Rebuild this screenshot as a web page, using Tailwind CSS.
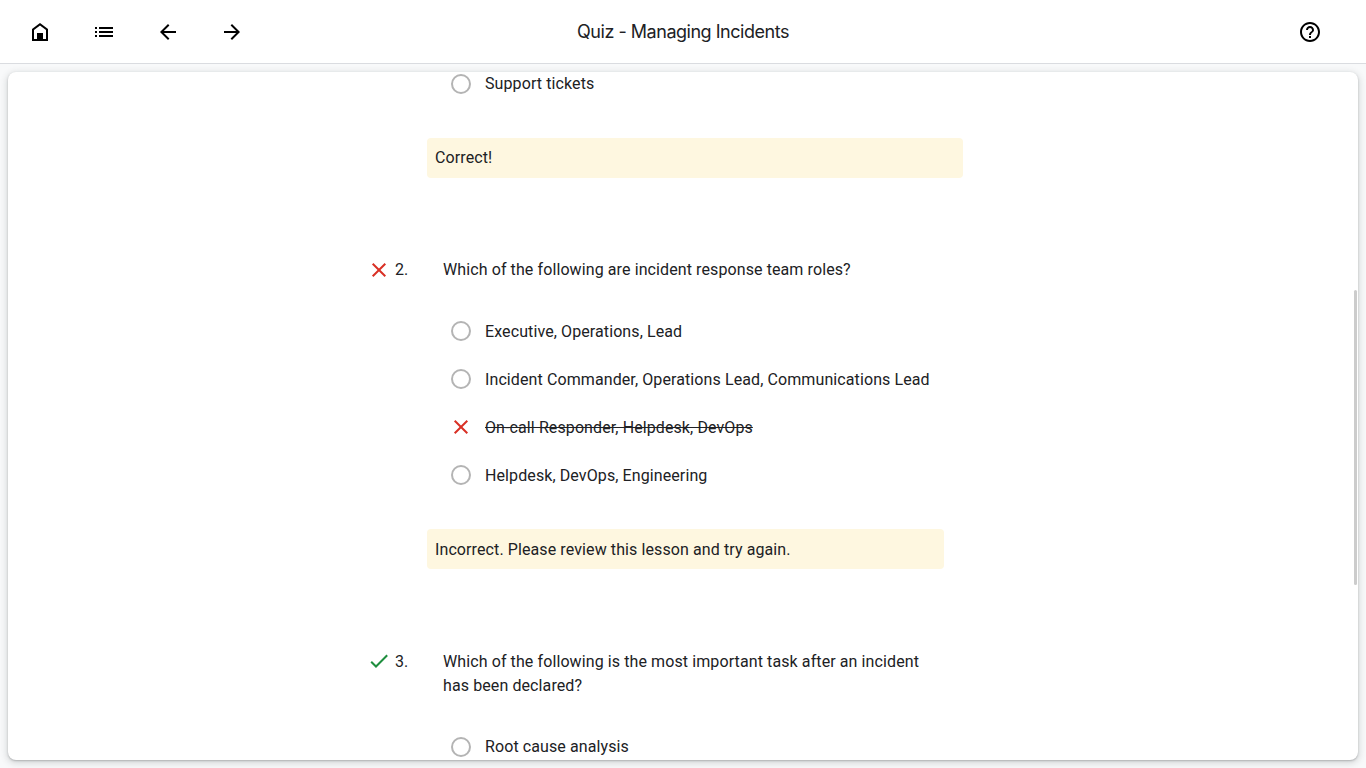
<!DOCTYPE html>
<html lang="en">
<head>
<meta charset="utf-8">
<title>Quiz - Managing Incidents</title>
<script src="https://cdn.jsdelivr.net/npm/@tailwindcss/browser@4"></script>
</head>
<body class="flex h-screen flex-col overflow-hidden bg-[#f8f9fa] font-[Roboto,sans-serif] text-base leading-6 tracking-[0.1px] text-[#202124]">
<header class="flex h-16 shrink-0 items-center justify-between border-b border-[#dadce0] bg-white px-7 text-black">
  <nav class="flex w-[480px] gap-10">
    <svg class="size-6" viewBox="0 0 24 24" fill="currentColor"><path d="M12 3 4 9v12h16V9l-8-6zm6 16H6v-9l6-4.5 6 4.500V19z"/><path d="M9 13h6v7H9z"/></svg>
    <svg class="size-6" viewBox="0 0 24 24" fill="currentColor"><path d="M3 7h2v2H3zM3 11h2v2H3zM3 15h2v2H3zM7 7h14v2H7zM7 11h14v2H7zM7 15h14v2H7z"/></svg>
    <svg class="size-6" viewBox="0 0 24 24" fill="currentColor"><path d="M20 11H7.830l5.590-5.590L12 4l-8 8 8 8 1.410-1.410L7.830 13H20v-2z"/></svg>
    <svg class="size-6" viewBox="0 0 24 24" fill="currentColor"><path d="m12 4-1.410 1.410L16.170 11H4v2h12.170l-5.580 5.590L12 20l8-8-8-8z"/></svg>
  </nav>
  <h1 class="font-[Inter,sans-serif] text-[18px] leading-6 tracking-[-0.48px] whitespace-nowrap text-[#202124]">Quiz - Managing Incidents</h1>
  <div class="flex w-[480px] justify-end pr-4">
    <svg class="size-6" viewBox="0 0 24 24" fill="currentColor"><path d="M11 18h2v-2h-2v2zm1-16C6.480 2 2 6.480 2 12s4.480 10 10 10 10-4.480 10-10S17.520 2 12 2zm0 18c-4.410 0-8-3.590-8-8s3.590-8 8-8 8 3.590 8 8-3.590 8-8 8zm0-14c-2.210 0-4 1.790-4 4h2c0-1.100.9-2 2-2s2 .9 2 2c0 2-3 1.750-3 5h2c0-2.250 3-2.500 3-5 0-2.210-1.790-4-4-4z"/></svg>
  </div>
</header>
<main class="relative m-2 h-[688px] shrink-0 rounded-lg bg-white shadow-[0_1px_2px_rgba(60,64,67,0.3),0_2px_6px_2px_rgba(60,64,67,0.15)]">
  <div class="h-full overflow-hidden rounded-lg pl-[360px]">
    <section class="-mt-3">
      <div class="flex h-12 items-center gap-[14px] pl-[83px]"><span class="size-5 rounded-full border-2 border-[#b4b4b4]"></span><span>Support tickets</span></div>
      <p class="mt-[30px] ml-[59px] h-10 w-[536px] rounded-[4px] bg-[#fef7e0] px-2 py-2">Correct!</p>
    </section>
    <section class="mt-20">
      <div class="flex">
        <svg class="mt-[3px] mr-[7px] ml-[2px] size-[18px]" viewBox="0 0 18 18" fill="none" stroke="#d93025" stroke-width="2"><path d="m2.700 2.700 12.600 12.600M15.300 2.700 2.700 15.300"/></svg>
        <span class="w-12">2.</span>
        <h2 class="w-[480px]">Which of the following are incident response team roles?</h2>
      </div>
      <ul class="mt-[25px] pl-[83px]">
        <li class="flex h-12 items-center gap-[14px]"><span class="size-5 rounded-full border-2 border-[#b4b4b4]"></span><span class="pt-0.5">Executive, Operations, Lead</span></li>
        <li class="flex h-12 items-center gap-[14px]"><span class="size-5 rounded-full border-2 border-[#b4b4b4]"></span><span class="pt-0.5">Incident Commander, Operations Lead, Communications Lead</span></li>
        <li class="flex h-12 items-center gap-[14px]"><svg class="size-5" viewBox="0 0 20 20" fill="none" stroke="#d93025" stroke-width="2"><path d="m3.700 3.700 12.600 12.600M16.300 3.700 3.700 16.300"/></svg><span class="pt-0.5 line-through">On-call Responder, Helpdesk, DevOps</span></li>
        <li class="flex h-12 items-center gap-[14px]"><span class="size-5 rounded-full border-2 border-[#b4b4b4]"></span><span class="pt-0.5">Helpdesk, DevOps, Engineering</span></li>
      </ul>
      <p class="mt-[30px] ml-[59px] h-10 w-[517px] rounded-[4px] bg-[#fef7e0] px-2 pt-[9px]">Incorrect. Please review this lesson and try again.</p>
    </section>
    <section class="mt-[81px]">
      <div class="flex">
        <svg class="mt-[2px] mr-[7px] ml-[2px] h-[18px] w-[18px] overflow-visible" viewBox="0 0 18 18" fill="none" stroke="#1e8e3e" stroke-width="2"><path d="m1.200 9.700 4.800 4.800L17.200 3.300"/></svg>
        <span class="w-12">3.</span>
        <h2 class="w-[480px]">Which of the following is the most important task after an incident has been declared?</h2>
      </div>
      <ul class="mt-[25px] pl-[83px]">
        <li class="flex h-12 items-center gap-[14px]"><span class="size-5 rounded-full border-2 border-[#b4b4b4]"></span><span>Root cause analysis</span></li>
      </ul>
    </section>
  </div>
  <div class="absolute top-[218px] right-[1px] h-[295px] w-[3px] rounded-sm bg-[#cccccc]"></div>
</main>
</body>
</html>
